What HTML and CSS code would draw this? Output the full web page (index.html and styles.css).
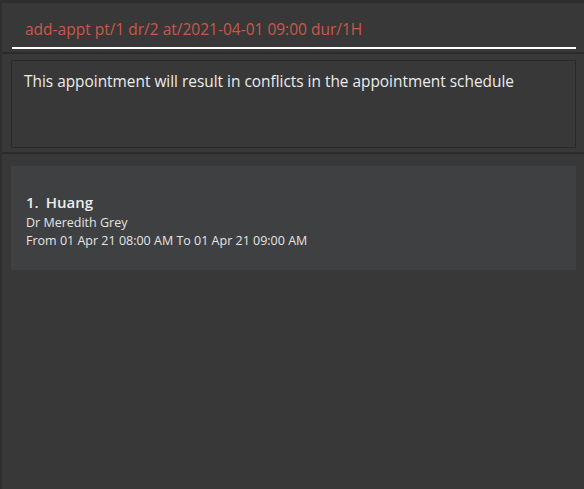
FILE: index.html
```html
<!DOCTYPE html>
<html>
<head>
<meta charset="utf-8">
<link rel="stylesheet" href="styles.css">
</head>
<body>
<div class="app">
  <div class="command-pane">
    <div class="command-box">add-appt pt/1 dr/2 at/2021-04-01 09:00 dur/1H</div>
  </div>
  <div class="result-pane">
    <div class="result-box">This appointment will result in conflicts in the appointment schedule</div>
  </div>
  <div class="list-pane">
    <div class="card">
      <div class="card-title"><span class="idx">1.</span>Huang</div>
      <div class="card-line">Dr Meredith Grey</div>
      <div class="card-line">From 01 Apr 21 08:00 AM To 01 Apr 21 09:00 AM</div>
    </div>
  </div>
</div>
</body>
</html>
```
FILE: styles.css
```css
html, body {
  margin: 0;
  padding: 0;
  background: #383838;
  font-family: "Open Sans", "Noto Sans", sans-serif;
}
.app {
  width: 584px;
  height: 489px;
  box-sizing: border-box;
  border-left: 2px solid #2e2e2e;
  border-top: 3px solid #2e2e2e;
  display: flex;
  flex-direction: column;
}
.command-pane {
  height: 51px;
  box-sizing: border-box;
  padding: 0 8px 0 10px;
  border-bottom: 2px solid #2b2b2b;
}
.command-box {
  height: 46px;
  box-sizing: border-box;
  border-bottom: 2px solid #ffffff;
  color: #c9594a;
  font-size: 15.5px;
  padding: 15px 0 0 13px;
  line-height: 22px;
}
.result-pane {
  height: 100px;
  box-sizing: border-box;
  padding: 6px 8px 0 9px;
  border-bottom: 2px solid #2b2b2b;
}
.result-box {
  height: 88px;
  box-sizing: border-box;
  border: 1px solid #2a2a2a;
  color: #ececec;
  font-size: 15.4px;
  padding: 10px 12px;
  line-height: 22px;
}
.list-pane {
  flex: 1;
  padding: 12px 8px 0 9px;
}
.card {
  background: #3f4042;
  height: 104px;
  box-sizing: border-box;
  padding: 26px 14px 0 15px;
  color: #e4e4e4;
}
.card-title {
  font-size: 15px;
  font-weight: 600;
  line-height: 20px;
  color: #ececec;
}
.idx {
  margin-right: 7px;
}
.card-line {
  font-size: 12.5px;
  line-height: 18px;
}
.card-title + .card-line {
  margin-top: 2px;
}
```
